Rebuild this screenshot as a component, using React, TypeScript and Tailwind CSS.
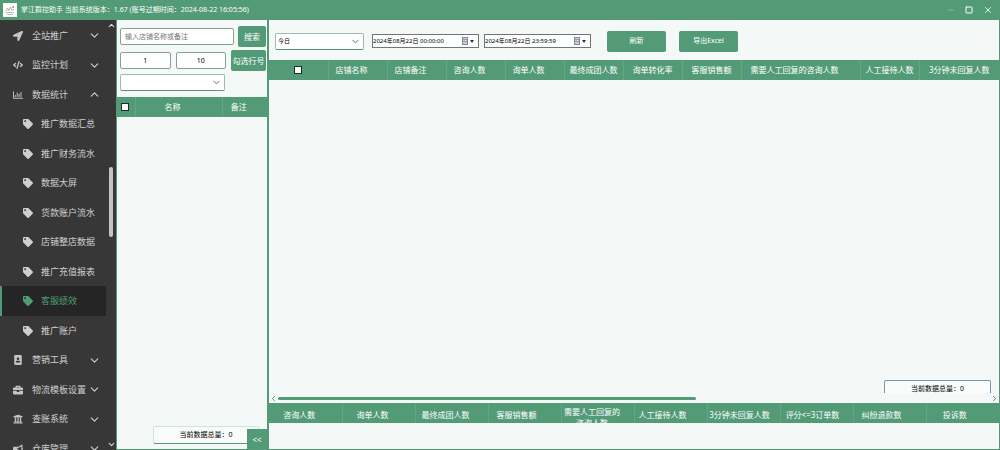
import { useState, type ReactNode } from 'react'
import {
  FaBriefcase,
  FaBullhorn,
  FaCode,
  FaLocationArrow,
  FaPortrait,
  FaRegChartBar,
  FaTag,
  FaUniversity,
} from 'react-icons/fa'
import { ChevronDown, ChevronLeft, ChevronRight, ChevronUp, Minus, Square, X } from 'lucide-react'

type MenuEntry = { label: string; icon?: ReactNode; open?: boolean }

const menu: MenuEntry[] = [
  { label: '全站推广', icon: <FaLocationArrow /> },
  { label: '监控计划', icon: <FaCode /> },
  { label: '数据统计', icon: <FaRegChartBar />, open: true },
  { label: '推广数据汇总' },
  { label: '推广财务流水' },
  { label: '数据大屏' },
  { label: '货款账户流水' },
  { label: '店铺整店数据' },
  { label: '推广充值报表' },
  { label: '客服绩效' },
  { label: '推广账户' },
  { label: '营销工具', icon: <FaPortrait /> },
  { label: '物流模板设置', icon: <FaBriefcase /> },
  { label: '查账系统', icon: <FaUniversity /> },
  { label: '仓库管理', icon: <FaBullhorn /> },
]

const columns = [
  { label: '店铺名称', cls: 'w-[59px] pr-3' },
  { label: '店铺备注', cls: 'w-[59px] pr-3' },
  { label: '咨询人数', cls: 'w-[59px] pr-3' },
  { label: '询单人数', cls: 'w-[59px] pr-3' },
  { label: '最终成团人数', cls: 'w-[59px]' },
  { label: '询单转化率', cls: 'w-[59px]' },
  { label: '客服销售额', cls: 'w-[59px]' },
  { label: '需要人工回复的咨询人数', cls: 'w-[119px] pr-3' },
  { label: '人工接待人数', cls: 'w-[59px]' },
  { label: '3分钟未回复人数', cls: '' },
]

const totals = [
  { label: '咨询人数', cls: 'pr-3' },
  { label: '询单人数', cls: 'pr-3' },
  { label: '最终成团人数', cls: 'pr-3' },
  { label: '客服销售额', cls: 'pr-4' },
  { label: '需要人工回复的咨询人数', cls: 'pl-px pr-3', wrap: true },
  { label: '人工接待人数', cls: 'pr-4' },
  { label: '3分钟未回复人数', cls: 'pr-2' },
  { label: '评分<=3订单数', cls: 'pr-2' },
  { label: '纠纷退款数', cls: 'pr-4' },
  { label: '投诉数', cls: 'pr-4' },
]

function TitleBar() {
  return (
    <header className="flex h-5 shrink-0 items-center bg-[#529b76] pl-[3px] pr-[7px] text-white">
      <svg viewBox="0 0 14 14" className="size-[14px] bg-white" aria-hidden="true">
        <path d="M3 8l1.500-3 1.500 2.500 1.500-3.500 1.500 3.500 2-1.500" fill="none" stroke="#a39a96" strokeWidth=".8" />
        <path d="M3 9.500h8M4 11.500h6" stroke="#9db3a6" strokeWidth=".8" />
        <circle cx="10" cy="4" r="1" fill="#c98b82" />
      </svg>
      <h1 className="ml-1 whitespace-nowrap text-[7px]">
        掌江群控助手 当前系统版本：1.67 (账号过期时间：2024-08-22 16:05:56)
      </h1>
      <div className="ml-auto flex items-center gap-[10px]">
        <button aria-label="最小化" className="opacity-50"><Minus size={8} strokeWidth={2} /></button>
        <button aria-label="最大化"><Square size={8} strokeWidth={3} /></button>
        <button aria-label="关闭"><X size={10} strokeWidth={2} /></button>
      </div>
    </header>
  )
}

function Sidebar() {
  const [current, setCurrent] = useState('客服绩效')
  return (
    <nav className="flex w-[116px] shrink-0 overflow-hidden bg-[#373737] text-[9px] text-[#cfcfcf]">
      <ul className="flex-1 pt-px">
        {menu.map((m) => {
          const on = m.label === current
          return (
            <li key={m.label} className="odd:h-[29px] even:h-[30px]">
              <button
                onClick={() => !m.icon && setCurrent(m.label)}
                className={`flex size-full items-center whitespace-nowrap border-l-2 ${
                  on ? 'border-[#529b76] bg-[#252525] text-[#529b76]' : 'border-transparent'
                }`}
              >
                {m.icon ? (
                  <>
                    <span className="ml-[11px] flex w-[19px] text-[10px] text-[#c4c4c4]">{m.icon}</span>
                    {m.label}
                    <span className="ml-auto mr-[5px]">
                      {m.open ? <ChevronUp size={13} /> : <ChevronDown size={13} />}
                    </span>
                  </>
                ) : (
                  <>
                    <FaTag className="ml-[21px] mr-2 text-[10px]" />
                    {m.label}
                  </>
                )}
              </button>
            </li>
          )
        })}
      </ul>
      <div className="flex w-[10px] flex-col items-center py-px text-[#d8d8d8]">
        <ChevronUp size={9} strokeWidth={3} />
        <div className="flex-[137]" />
        <div className="w-1 flex-[69] rounded-full bg-[#c4c4c4]" />
        <div className="flex-[203]" />
        <ChevronDown size={9} strokeWidth={3} />
      </div>
    </nav>
  )
}

function Check({ label }: { label: string }) {
  return (
    <input
      type="checkbox"
      aria-label={label}
      className="block size-2 appearance-none border border-[#1d2b24] bg-white checked:bg-[#1d2b24]"
    />
  )
}

function Select({ label, value, cls }: { label: string; value: string; cls: string }) {
  return (
    <div className={`relative ${cls}`}>
      <select
        aria-label={label}
        className="block h-[17px] w-full appearance-none rounded-xs border border-[#9dbcae] border-b-[#5d8f78] bg-white pl-0.5 text-[6px] text-black"
      >
        <option>{value}</option>
      </select>
      <ChevronDown size={11} className="pointer-events-none absolute right-[3px] top-[3px] text-[#4f6b5f]" />
    </div>
  )
}

function DateField({ label, value }: { label: string; value: string }) {
  return (
    <div className="flex h-[14px] w-[107px] items-center border border-[#6d7774] bg-white pr-1">
      <input
        aria-label={label}
        defaultValue={value}
        className="w-0 flex-1 bg-transparent text-[6px] text-black outline-none"
      />
      <button aria-label={`${label}选择`} className="flex items-center gap-0.5">
        <svg viewBox="0 0 6 8" className="h-2 w-1.5" aria-hidden="true">
          <rect x=".5" y=".5" width="5" height="7" fill="#c9ccd8" stroke="#85899a" />
          <path d="M1 2.500h4M1 4.500h4" stroke="#85899a" strokeWidth=".7" />
        </svg>
        <svg viewBox="0 0 4 3" className="h-[3px] w-1" aria-hidden="true">
          <path d="M0 0h4L2 3z" fill="#333" />
        </svg>
      </button>
    </div>
  )
}

function ShopPanel() {
  const field =
    'h-[17px] rounded-xs border border-[#7fa494] bg-white text-[7px] text-black placeholder:text-[#777] outline-none'
  const button = 'shrink-0 rounded-xs bg-[#529b76] text-[8px] whitespace-nowrap text-white'
  return (
    <section className="relative flex w-[153px] shrink-0 flex-col border-l border-r-2 border-[#529b76] bg-[#f4f9f8]">
      <form className="flex h-[77px] flex-col gap-[3px] pl-[3px] pr-px pt-1.5">
        <div className="flex items-center justify-between gap-1">
          <input aria-label="店铺" placeholder="输入店铺名称或备注" className={`${field} min-w-0 flex-1 pl-1`} />
          <button type="button" className={`${button} h-[21px] w-7`}>搜索</button>
        </div>
        <div className="flex items-center gap-[5px]">
          <input aria-label="起始行" defaultValue="1" className={`${field} w-0 flex-1 text-center`} />
          <input aria-label="结束行" defaultValue="10" className={`${field} w-0 flex-1 text-center`} />
          <button type="button" className={`${button} h-[21px] w-[35px]`}>勾选行号</button>
        </div>
        <Select label="分组" value="" cls="w-[105px]" />
      </form>
      <table className="w-full table-fixed bg-[#529b76] text-[8px] text-white">
        <thead>
          <tr className="h-5">
            <th className="w-[18px] border-r border-[#62a784] pl-1"><Check label="全选店铺" /></th>
            <th className="border-r border-[#62a784] pr-3 font-normal">名称</th>
            <th className="w-[45px] pr-3 font-normal">备注</th>
          </tr>
        </thead>
      </table>
      <div className="flex flex-1 items-end border-b border-[#529b76] pb-[5px] pl-9">
        <output className="flex h-[18px] w-[106px] items-center justify-center rounded-xs border border-[#c9e6da] border-b-[#529b76] bg-[#f9fcfb] text-[7px] text-black">
          当前数据总量：0
        </output>
      </div>
      <button aria-label="收起" className="absolute bottom-0 right-0 h-[21px] w-5 bg-[#529b76] text-[8px] text-white">
        &lt;&lt;
      </button>
    </section>
  )
}

function DataPanel() {
  const action = 'h-[21px] w-[59px] rounded-xs bg-[#529b76] text-[7px] text-white'
  return (
    <main className="flex min-w-0 flex-1 flex-col border-b border-r border-[#529b76] bg-[#f4f9f8]">
      <div className="flex h-10 shrink-0 items-center pl-[6px] pt-0.5">
        <Select label="时间范围" value="今日" cls="w-[89px]" />
        <div className="ml-2 flex gap-[5px]">
          <DateField label="开始时间" value="2024年08月22日 00:00:00" />
          <DateField label="结束时间" value="2024年08月22日 23:59:59" />
        </div>
        <div className="ml-4 flex gap-[13px]">
          <button className={action}>刷新</button>
          <button className={action}>导出Excel</button>
        </div>
      </div>
      <table className="w-full shrink-0 table-fixed bg-[#529b76] text-[8px] text-white">
        <thead>
          <tr className="h-5">
            <th className="w-[59px] border-r border-[#62a784] pl-[25px]"><Check label="全选" /></th>
            {columns.map((c) => (
              <th key={c.label} className={`whitespace-nowrap border-r border-[#62a784] p-0 font-normal last:border-r-0 ${c.cls}`}>
                {c.label}
              </th>
            ))}
          </tr>
        </thead>
      </table>
      <div className="flex flex-1 items-end justify-end pr-2">
        <output className="flex h-[13px] w-[107px] items-center justify-center rounded-t-xs border border-b-0 border-[#6f97b8] bg-[#f9fcfb] pt-1 text-[7px] text-black">
          当前数据总量：0
        </output>
      </div>
      <div className="flex h-[10px] shrink-0 items-center text-[#3f6654]">
        <ChevronLeft size={9} className="shrink-0" />
        <div className="h-[3px] flex-[417] rounded-full bg-[#529b76]" />
        <div className="flex-[294]" />
        <ChevronRight size={9} className="shrink-0" />
      </div>
      <table className="w-full shrink-0 table-fixed bg-[#529b76] text-[8px] text-white">
        <thead>
          <tr className="h-5">
            {totals.map((c) => (
              <th key={c.label} className={`border-r border-[#62a784] p-0 font-normal last:border-r-0 ${c.cls}`}>
                <div className={c.wrap ? 'h-5 overflow-hidden pt-[3px] leading-[11px]' : 'h-5 whitespace-nowrap pt-0.5 leading-5'}>
                  {c.label}
                </div>
              </th>
            ))}
          </tr>
        </thead>
      </table>
      <div className="h-[26px] shrink-0" />
    </main>
  )
}

export default function App() {
  return (
    <div className="flex h-screen flex-col overflow-hidden font-['Noto_Sans','Noto_Sans_CJK_SC',sans-serif]">
      <TitleBar />
      <div className="flex min-h-0 flex-1">
        <Sidebar />
        <ShopPanel />
        <DataPanel />
      </div>
    </div>
  )
}
